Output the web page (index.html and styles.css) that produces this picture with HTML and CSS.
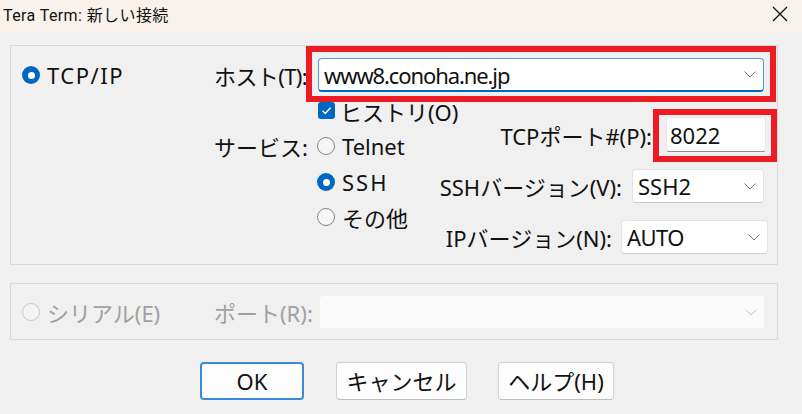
FILE: index.html
```html
<!DOCTYPE html>
<html lang="ja">
<head>
<meta charset="utf-8">
<title>Tera Term: 新しい接続</title>
<link rel="stylesheet" href="styles.css">
</head>
<body>
<div class="titlebar">
  <span class="title">Tera Term: 新しい接続</span>
  <svg class="close" width="16" height="16" viewBox="0 0 16 16"><path d="M1 1 L15 15 M15 1 L1 15" stroke="#111" stroke-width="1.3" fill="none"/></svg>
</div>
<div class="dialog">
  <div class="group group-tcp">
    <div class="col-left">
      <div class="opt opt-tcp"><span class="radio on"></span><span class="t-tcp">TCP/IP</span></div>
    </div>
    <div class="col-main">
      <div class="host-row">
        <span class="host-lbl">ホスト(T):</span>
        <div class="combo focus host-combo"><span class="t-host">www8.conoha.ne.jp</span><svg class="chev" width="12" height="7" viewBox="0 0 12 7"><path d="M0.5 0.5 L6 6 L11.5 0.5" stroke="#777" stroke-width="1" fill="none"/></svg></div>
      </div>
      <div class="svc">
        <div class="svc-lbl">サービス:</div>
        <div class="svc-opts">
          <div class="opt chk-row"><span class="check"><svg width="17" height="17" viewBox="0 0 17 17"><path d="M4.5 8.8 L7.3 11.5 L12.5 5.8" stroke="#fff" stroke-width="1.4" fill="none"/></svg></span>ヒストリ(O)</div>
          <div class="opt r-telnet"><span class="radio"></span><span>Telnet</span></div>
          <div class="opt r-ssh"><span class="radio on"></span><span class="t-ssh">SSH</span></div>
          <div class="opt r-other"><span class="radio"></span>その他</div>
        </div>
        <div class="svc-right">
          <div class="rrow port-row"><span>TCPポート#(P):</span><div class="field port"><span>8022</span></div></div>
          <div class="rrow ssh-row"><span>SSHバージョン(V):</span><div class="combo ssh-combo"><span>SSH2</span><svg class="chev" width="12" height="7" viewBox="0 0 12 7"><path d="M0.5 0.5 L6 6 L11.5 0.5" stroke="#777" stroke-width="1" fill="none"/></svg></div></div>
          <div class="rrow ip-row"><span>IPバージョン(N):</span><div class="combo ip-combo"><span class="t-auto">AUTO</span><svg class="chev" width="12" height="7" viewBox="0 0 12 7"><path d="M0.5 0.5 L6 6 L11.5 0.5" stroke="#777" stroke-width="1" fill="none"/></svg></div></div>
        </div>
      </div>
    </div>
  </div>
  <div class="group group-serial">
    <div class="col-left">
      <div class="opt opt-serial disabled"><span class="radio dis"></span>シリアル(E)</div>
    </div>
    <div class="serial-main">
      <span class="port-lbl disabled">ポート(R):</span>
      <div class="combo dis-combo"><svg class="chev" width="12" height="7" viewBox="0 0 12 7"><path d="M0.5 0.5 L6 6 L11.5 0.5" stroke="#c4c4c4" stroke-width="1" fill="none"/></svg></div>
    </div>
  </div>
  <div class="buttons">
    <button class="btn btn-ok">OK</button>
    <button class="btn btn-cancel">キャンセル</button>
    <button class="btn btn-help">ヘルプ(H)</button>
  </div>
</div>
<div class="mark mark-host"></div>
<div class="mark mark-port"></div>
</body>
</html>
```
FILE: styles.css
```css
* { box-sizing: border-box; }
html, body { margin: 0; padding: 0; }
body {
  width: 802px;
  height: 414px;
  overflow: hidden;
  background: #f0f0f0;
  font-family: "Noto Sans", "Noto Sans CJK JP", sans-serif;
  font-size: 22px;
  color: #111;
  position: relative;
}
.titlebar {
  height: 33px;
  background: #f9f1ec;
  display: flex;
  align-items: center;
  justify-content: space-between;
  padding: 0 14px 2px 3px;
}
.title { font-family: "Roboto", "Noto Sans CJK JP", sans-serif; font-size: 16px; line-height: 20px; letter-spacing: 0.4px; }
.close { display: block; margin-top: -4px; }
.dialog { padding: 12px 0 0 10px; }
.group {
  border: 1px solid #d8d8d8;
  display: flex;
}
.group-tcp {
  width: 768px;
  height: 220px;
  padding: 12px 0 0 11px;
}
.col-left { width: 192px; flex: none; }
.opt {
  display: flex;
  align-items: center;
  white-space: nowrap;
}
.opt-tcp { height: 34px; }
.t-tcp { letter-spacing: 1.5px; }
.t-host { letter-spacing: -1.1px; }
.t-ssh { letter-spacing: 2px; }
.t-auto { letter-spacing: -0.6px; }
.radio {
  width: 18px;
  height: 18px;
  border-radius: 50%;
  border: 1px solid #858585;
  background: #f6f6f6;
  flex: none;
  margin-right: 7px;
  position: relative;
}
.radio.on {
  border: none;
  background: #0067c0;
}
.radio.on::after {
  content: "";
  position: absolute;
  left: 5.5px;
  top: 5.5px;
  width: 7px;
  height: 7px;
  border-radius: 50%;
  background: #fff;
}
.radio.dis { border-color: #c8c8c8; background: #f3f3f3; }
.col-main { width: 563px; flex: none; }
.host-row { display: flex; height: 34px; align-items: center; }
.host-lbl { width: 104px; flex: none; letter-spacing: -0.6px; white-space: nowrap; }
.combo {
  background: #fff;
  border: 1px solid #e3e3e3;
  border-bottom-color: #cdcdcd;
  border-radius: 4px;
  display: flex;
  align-items: center;
  justify-content: space-between;
  padding: 0 7px 0 5px;
  white-space: nowrap;
}
.combo.focus {
  border: 1px solid #4f9be4;
  border-bottom: 2px solid #0067c0;
}
.host-combo { width: 446px; height: 34px; }
.chev { display: block; flex: none; }
.svc { display: flex; }
.svc-lbl { width: 103px; flex: none; padding-top: 37px; line-height: 36px; height: 73px; }
.svc-opts { width: 120px; flex: none; }
.chk-row { margin-top: 1px; height: 35px; padding-left: 1px; }
.check {
  width: 17px;
  height: 17px;
  border-radius: 3px;
  background: #0067c0;
  flex: none;
  margin-right: 5px;
}
.check svg { display: block; }
.r-telnet, .r-ssh { height: 36px; }
.r-other { height: 34px; }
.svc-right {
  flex: 1;
  display: flex;
  flex-direction: column;
  align-items: flex-end;
}
.rrow { display: flex; align-items: center; white-space: nowrap; }
.port-row { margin-top: 25px; height: 35px; margin-right: 11px; gap: 14px; }
.ssh-row { margin-top: 17px; height: 34px; margin-right: 13px; gap: 10px; }
.ip-row { margin-top: 17px; height: 34px; margin-right: 9px; gap: 9px; }
.field {
  background: #fff;
  border: 1px solid #e6e6e6;
  border-bottom: 1px solid #8c8c8c;
  border-radius: 3px;
  display: flex;
  align-items: center;
  padding-left: 3px;
}
.port { width: 100px; height: 35px; }
.ssh-combo { width: 132px; height: 34px; }
.ip-combo { width: 147px; height: 34px; }
.group-serial {
  margin-top: 18px;
  width: 768px;
  height: 57px;
  padding: 11px 0 0 11px;
}
.opt-serial { height: 34px; }
.disabled { color: #a0a0a0; }
.serial-main { display: flex; align-items: center; height: 34px; }
.port-lbl { width: 105px; flex: none; }
.dis-combo {
  width: 446px;
  height: 34px;
  background: #fafafa;
  border: 1px solid #f2f2f2;
  justify-content: flex-end;
}
.buttons {
  display: flex;
  margin-top: 22px;
  padding-left: 190px;
}
.btn {
  font-family: inherit;
  font-size: 22px;
  color: #111;
  height: 38px;
  background: #fdfdfd;
  border: 1px solid #d0d0d0;
  border-bottom-color: #bdbdbd;
  border-radius: 4px;
  padding: 0;
  line-height: 1;
}
.btn-ok { width: 104px; border: 2px solid #3a8ad8; }
.btn-cancel { width: 131px; margin-left: 32px; }
.btn-help { width: 116px; margin-left: 31px; }
.mark {
  position: absolute;
  border: 6px solid #ed1c24;
}
.mark-host { left: 306px; top: 46px; width: 470px; height: 56px; }
.mark-port { left: 653px; top: 109px; width: 124px; height: 53px; }
```
